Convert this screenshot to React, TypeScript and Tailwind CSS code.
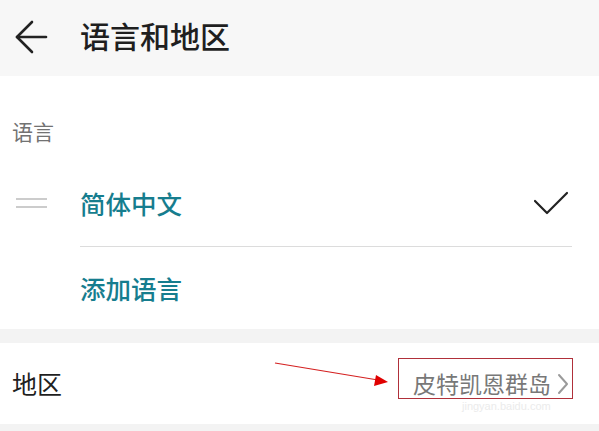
import React from "react";

const font = { fontFamily: '"Noto Sans CJK SC", "Noto Sans", sans-serif' };

export default function App() {
  return (
    <div className="relative w-[599px] h-[431px] bg-white overflow-hidden" style={font}>
      {/* Header */}
      <div className="h-[76px] bg-[#f7f7f7] flex items-center">
        <div className="w-[80px] h-full flex items-center pl-[14px]">
          <svg width="34" height="34" viewBox="0 0 34 34" fill="none" stroke="#222" strokeWidth="2.6" strokeLinecap="round" strokeLinejoin="round" className="-mt-[3px]">
            <path d="M3 17 H32" />
            <path d="M18 2 L3 17 L18 32" />
          </svg>
        </div>
        <div className="text-[30px] leading-none text-[#1f1f1f] font-medium -mt-[6px]">语言和地区</div>
      </div>

      {/* Language section */}
      <div className="bg-white">
        <div className="h-[86px] pt-[24px] pl-[12px] flex items-center">
          <span className="text-[21px] leading-none text-[#727272]">语言</span>
        </div>
        <div className="h-[84px] flex items-center">
          <div className="w-[80px] flex flex-col gap-[6px] pl-[16px] -mt-[2px]">
            <div className="w-[31px] h-[2px] bg-[#cccccc]" />
            <div className="w-[31px] h-[2px] bg-[#cccccc]" />
          </div>
          <div className="flex-1 text-[25.5px] leading-none text-[#167d8e] font-medium -mt-[2px]">简体中文</div>
          <div className="pr-[30px]">
            <svg width="36" height="26" viewBox="0 0 36 26" fill="none" stroke="#222" strokeWidth="2.2" strokeLinecap="round" strokeLinejoin="round">
              <path d="M2 10 L14 22 L34 2" />
            </svg>
          </div>
        </div>
        <div className="ml-[80px] mr-[27px] h-px bg-[#dcdcdc]" />
        <div className="h-[82px] flex items-center pl-[80px]">
          <span className="text-[25.5px] leading-none text-[#167d8e] font-medium">添加语言</span>
        </div>
      </div>

      <div className="h-[14px] bg-[#f3f3f3]" />

      {/* Region row */}
      <div className="h-[81px] flex items-center pl-[12px] pr-[30px]">
        <span className="flex-1 text-[25px] leading-none text-[#1f1f1f]">地区</span>
        <span className="text-[23px] leading-none text-[#787878] mr-[6px]">皮特凯恩群岛</span>
        <svg width="12" height="22" viewBox="0 0 12 22" fill="none" stroke="#9a9a9a" strokeWidth="2" strokeLinecap="round" strokeLinejoin="round">
          <path d="M2 2 L10 11 L2 20" />
        </svg>
      </div>
      <div className="h-[7px] bg-[#f3f3f3]" />

      {/* Annotation overlay */}
      <div className="absolute left-[398px] top-[358px] w-[175px] h-[41px] border border-[#b0303a]" />
      <svg className="absolute left-0 top-0" width="599" height="431" viewBox="0 0 599 431">
        <line x1="275" y1="363" x2="378" y2="380" stroke="#d42020" strokeWidth="1.2" />
        <polygon points="388,382 376,375 374,386" fill="#e00000" />
      </svg>
      <div className="absolute left-[462px] top-[401px] text-[11px] leading-none text-[#ebebeb]" style={{ fontFamily: '"Liberation Sans", sans-serif' }}>
        jingyan.baidu.com
      </div>
    </div>
  );
}
